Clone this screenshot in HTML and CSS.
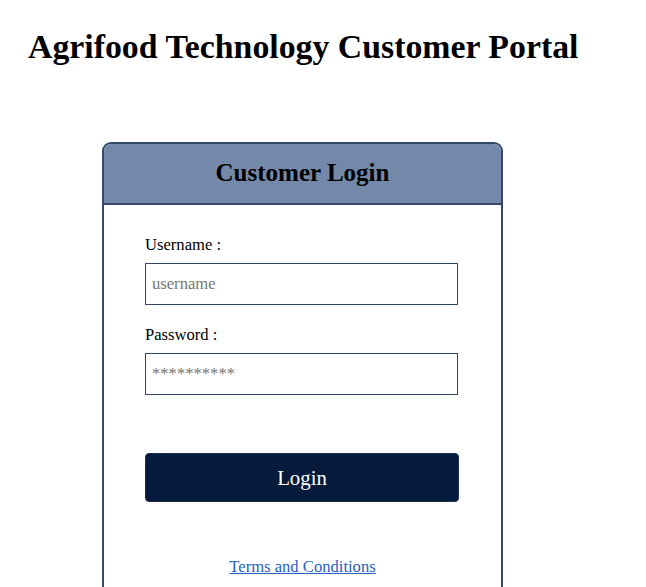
FILE: index.html
```html
<!DOCTYPE html>
<html lang="en">
<head>
    <meta charset="UTF-8">
    <meta name="viewport" content="width=device-width, initial-scale=1.0">
    <title>Customer Portal</title>
    <link rel="stylesheet" href="styles.css">
</head>
<body>
    <div class="page">
        <h1>Agrifood Technology Customer Portal</h1>
        <div class="login">
            <div class="login-head">
                <h2>Customer Login</h2>
            </div>
            <form class="login-form" autocomplete="off">
                <label for="uname">Username :</label>
                <input type="text" id="uname" name="uname" placeholder="username">
                <label for="pwd">Password :</label>
                <input type="password" id="pwd" name="pwd" placeholder="**********">
                <button type="submit">Login</button>
                <a href="#" class="terms">Terms and Conditions</a>
            </form>
        </div>
    </div>
</body>
</html>
```

FILE: styles.css
```css
* {
    box-sizing: border-box;
    margin: 0;
    padding: 0;
}
body {
    font-family: "Liberation Serif", "Times New Roman", serif;
    font-size: 16.6px;
    color: #000;
    background-color: #fff;
}
.page {
    padding: 28px 28px 0;
    h1 {
        font-size: 33.8px;
        font-weight: bold;
    }
}
.login {
    margin: 76px 0 0 74px;
    width: 401px;
    border: 2px solid #34496a;
    border-bottom: none;
    border-radius: 9px 9px 0 0;
    .login-head {
        background-color: #7489a9;
        border-bottom: 2px solid #34496a;
        border-radius: 7px 7px 0 0;
        padding: 15px 0 16px;
        text-align: center;
        h2 {
            font-size: 25px;
            line-height: 28px;
        }
    }
}
.login-form {
    display: flex;
    flex-direction: column;
    align-items: flex-start;
    padding: 30px 0 80px 41px;
    label {
        line-height: 19px;
        margin-bottom: 9px;
    }
    input {
        width: 313px;
        height: 42px;
        margin-bottom: 20px;
        padding: 0 6px;
        border: 1px solid #2f4564;
        outline: none;
        font-family: inherit;
        font-size: 16.6px;
        &::placeholder {
            color: #767676;
        }
    }
    input[type="password"] {
        margin-bottom: 58px;
    }
    button {
        width: 314px;
        height: 49px;
        background-color: #061b3c;
        border: 1px solid #1c2f4d;
        border-radius: 4px;
        color: #fff;
        font-family: inherit;
        font-size: 20.8px;
    }
    .terms {
        align-self: center;
        margin: 55px 0 0 -41px;
        color: #1f5fbf;
        text-decoration: underline;
        line-height: 19px;
    }
}
```
